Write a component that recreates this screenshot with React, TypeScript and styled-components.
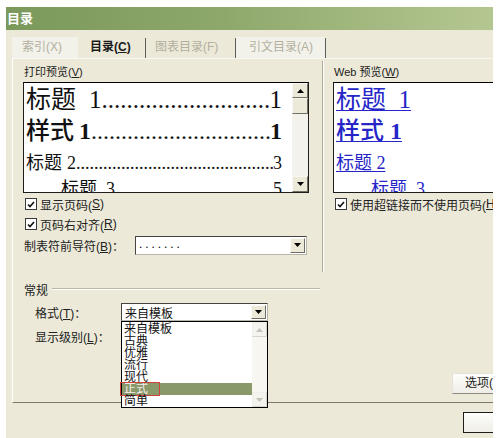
import React from 'react';
import styled, { createGlobalStyle } from 'styled-components';

const SANS = `"Liberation Sans", "Noto Sans CJK SC", sans-serif`;
const SERIF = `"Liberation Serif", "Noto Sans CJK SC", serif`;

const Global = createGlobalStyle`
  html, body { margin: 0; padding: 0; background: #ffffff; }
  body { font-family: ${SANS}; }
  * { box-sizing: border-box; }
`;

const Screen = styled.div`
  width: 500px;
  height: 438px;
  padding: 7px 7px 0 6px;
  background: #ffffff;
  overflow: hidden;
`;

const Dialog = styled.div`
  width: 487px;
  height: 431px;
  background: #ece9d8;
  display: flex;
  flex-direction: column;
  overflow: hidden;
`;

const TitleBar = styled.div`
  height: 23px;
  flex-shrink: 0;
  background: linear-gradient(90deg, #7a995a 0%, #8ea86c 45%, #b5c791 100%);
  color: #ffffff;
  font: bold 13px/23px ${SANS};
  padding-left: 1px;
`;

const Body = styled.div`
  display: flex;
  flex-direction: column;
  padding: 7px 0 0 6px;
`;

const TabRow = styled.div`
  display: flex;
  height: 21px;
`;

const Tab = styled.div<{ $w: number; $pl: number; $off?: boolean; $raised?: boolean }>`
  width: ${(p) => p.$w}px;
  padding-left: ${(p) => p.$pl}px;
  font-size: 12px;
  line-height: 21px;
  white-space: nowrap;
  color: ${(p) => (p.$off ? '#b3b09f' : '#1a1a1a')};
  font-weight: ${(p) => (p.$off ? 400 : 700)};
  background: ${(p) => (p.$raised ? '#f2f1ea' : 'transparent')};
`;

const TabSep = styled.div`
  width: 1px;
  margin: 1px 0 0;
  background: #5c5c5c;
`;

const Panel = styled.div`
  width: 481px;
  height: 345px;
  border-top: 1px solid #f8f7f2;
  border-left: 1px solid #ffffff;
  border-bottom: 1px solid #7d7b70;
  display: flex;
  flex-direction: column;
`;

const TopArea = styled.div`
  display: flex;
  height: 213px;
  flex-shrink: 0;
`;

const LeftCol = styled.div`
  width: 309px;
  padding: 7px 0 0 11px;
  display: flex;
  flex-direction: column;
`;

const RightCol = styled.div`
  flex: 1;
  padding: 7px 0 0 10px;
  display: flex;
  flex-direction: column;
  overflow: hidden;
`;

const VSep = styled.div`
  width: 2px;
  margin-top: 2px;
  border-left: 1px solid #aca899;
  border-right: 1px solid #ffffff;
`;

const Caption = styled.div`
  font-size: 11px;
  line-height: 12px;
  height: 12px;
  color: #222;
  white-space: nowrap;
`;

const PreviewBox = styled.div<{ $w: number }>`
  margin: 4px 0 0 -1px;
  width: ${(p) => p.$w}px;
  height: 111px;
  flex-shrink: 0;
  border: 1px solid #1e1e1e;
  border-top-color: #000;
  background: #ffffff;
  display: flex;
  overflow: hidden;
`;

const PreviewText = styled.div<{ $pr: number }>`
  flex: 1;
  min-width: 0;
  padding: 0 ${(p) => p.$pr}px 0 2px;
  overflow: hidden;
`;

const PRow = styled.div<{ $size: number; $lh: number; $bold?: boolean; $indent?: number }>`
  display: flex;
  align-items: baseline;
  height: ${(p) => p.$lh}px;
  line-height: ${(p) => p.$lh}px;
  font-family: ${SERIF};
  font-size: ${(p) => p.$size}px;
  font-weight: ${(p) => (p.$bold ? 500 : 400)};
  color: #111;
  padding-left: ${(p) => p.$indent ?? 0}px;
  white-space: nowrap;
`;

const Num = styled.span<{ $gap: number; $bold?: boolean }>`
  margin-left: ${(p) => p.$gap}px;
  font-weight: ${(p) => (p.$bold ? 700 : 400)};
`;

const Leader = styled.span`
  flex: 1;
  min-width: 0;
  overflow: hidden;
  white-space: nowrap;
  font-weight: 400;
`;

const Page = styled.span<{ $bold?: boolean }>`
  flex-shrink: 0;
  font-weight: ${(p) => (p.$bold ? 700 : 400)};
`;

const LinkRow = styled(PRow)`
  color: #2626c8;
`;

const Link = styled.span`
  text-decoration: underline;
  text-decoration-thickness: 1px;
  text-underline-offset: 2px;
`;

const ScrollBar = styled.div<{ $w: number; $light?: boolean }>`
  width: ${(p) => p.$w}px;
  flex-shrink: 0;
  display: flex;
  flex-direction: column;
  background: ${(p) => (p.$light ? '#f7f6f1' : '#f3f2ec')};
`;

const SBtn = styled.div<{ $h: number; $off?: boolean }>`
  height: ${(p) => p.$h}px;
  display: flex;
  align-items: center;
  justify-content: center;
  background: ${(p) => (p.$off ? '#f4f3ee' : '#ece9d8')};
  border: 1px solid;
  border-color: ${(p) =>
    p.$off ? '#f0efe9 #d8d6cc #d8d6cc #f0efe9' : '#f8f7f3 #716f64 #716f64 #f8f7f3'};
`;

const Spacer = styled.div`
  flex: 1;
`;

const Arrow = ({ up, color = '#000' }: { up?: boolean; color?: string }) => (
  <svg width="7" height="4" viewBox="0 0 7 4">
    <polygon points={up ? '0,4 7,4 3.5,0' : '0,0 7,0 3.5,4'} fill={color} />
  </svg>
);

const CheckRow = styled.div<{ $mt?: number }>`
  display: flex;
  align-items: center;
  height: 20px;
  margin-top: ${(p) => p.$mt ?? 0}px;
  padding-left: 1px;
  font-size: 12px;
  color: #222;
  white-space: nowrap;
`;

const Box = styled.span`
  width: 12px;
  height: 12px;
  flex-shrink: 0;
  margin-right: 3px;
  background: #ffffff;
  border: 1px solid #3a3a3a;
  display: flex;
  align-items: center;
  justify-content: center;
`;

const Check = () => (
  <Box>
    <svg width="8" height="7" viewBox="0 0 8 7">
      <path d="M1 3.5 L3 5.5 L7 1" stroke="#111" strokeWidth="1.6" fill="none" />
    </svg>
  </Box>
);

const LeaderRow = styled.div`
  display: flex;
  align-items: center;
  height: 22px;
  font-size: 12px;
  color: #222;
  white-space: nowrap;
`;

const LeaderLabel = styled.span`
  width: 111px;
`;

const Combo = styled.div<{ $w: number; $h: number }>`
  position: relative;
  width: ${(p) => p.$w}px;
  height: ${(p) => p.$h}px;
  background: #ffffff;
  border: 1px solid #444;
  border-right-color: #b8b6aa;
  border-bottom-color: #b8b6aa;
  display: flex;
  align-items: center;
`;

const ComboText = styled.span`
  flex: 1;
  padding-left: 3px;
  font-size: 12px;
  color: #111;
  white-space: nowrap;
`;

const DotText = styled(ComboText)`
  font-family: ${SERIF};
  letter-spacing: 3px;
  font-size: 13px;
  line-height: 13px;
  padding-bottom: 4px;
`;

const ComboBtn = styled.div<{ $h: number }>`
  width: 15px;
  height: ${(p) => p.$h}px;
  margin-right: 1px;
  display: flex;
  align-items: center;
  justify-content: center;
  background: #ece9d8;
  border: 1px solid;
  border-color: #fbfaf6 #716f64 #716f64 #fbfaf6;
`;

const General = styled.div`
  display: flex;
  flex-direction: column;
  padding: 11px 0 0 11px;
`;

const GroupHead = styled.div`
  display: flex;
  align-items: center;
  width: 296px;
  height: 12px;
  font-size: 12px;
  color: #222;
`;

const GroupLine = styled.div`
  flex: 1;
  margin-left: 4px;
  height: 2px;
  border-top: 1px solid #b9b6a6;
  border-bottom: 1px solid #ffffff;
`;

const FieldRow = styled.div<{ $mt: number }>`
  display: flex;
  align-items: center;
  height: 18px;
  margin-top: ${(p) => p.$mt}px;
  padding-left: 11px;
  font-size: 12px;
  color: #222;
`;

const FieldLabel = styled.span`
  width: 86px;
  white-space: nowrap;
`;

const DropList = styled.div`
  position: absolute;
  top: 17px;
  left: -1px;
  width: 147px;
  height: 87px;
  background: #ffffff;
  border: 1px solid #000;
  display: flex;
  z-index: 5;
`;

const Items = styled.div`
  flex: 1;
  padding-top: 1px;
`;

const Item = styled.div<{ $sel?: boolean }>`
  position: relative;
  height: 12px;
  line-height: 12px;
  font-size: 12px;
  padding-left: 2px;
  color: ${(p) => (p.$sel ? '#f6ecec' : '#111')};
  background: ${(p) => (p.$sel ? '#8a996a' : 'transparent')};
  white-space: nowrap;
`;

const Mark = styled.span`
  position: absolute;
  left: -2px;
  top: -1px;
  width: 40px;
  height: 14px;
  border: 1px solid #d2423c;
`;

const ButtonRow = styled.div<{ $mt: number; $pl: number }>`
  display: flex;
  margin-top: ${(p) => p.$mt}px;
  padding-left: ${(p) => p.$pl}px;
`;

const Btn = styled.div<{ $def?: boolean }>`
  width: 80px;
  height: 21px;
  flex-shrink: 0;
  padding-left: 12px;
  font-size: 12px;
  line-height: 19px;
  color: #222;
  white-space: nowrap;
  background: linear-gradient(#fdfdfb, #efeee8);
  border: 1px solid;
  border-color: ${(p) => (p.$def ? '#1c1c1c' : '#e6e4da #8c8a80 #8c8a80 #e6e4da')};
`;

const dots = '.'.repeat(120);

const styles = ['来自模板', '古典', '优雅', '流行', '现代', '正式', '简单'];

export default function App() {
  return (
    <>
      <Global />
      <Screen>
        <Dialog>
          <TitleBar>目录</TitleBar>
          <Body>
            <TabRow>
              <Tab $w={66} $pl={10} $off $raised>索引(X)</Tab>
              <Tab $w={67} $pl={12}>目录(<u>C</u>)</Tab>
              <TabSep />
              <Tab $w={89} $pl={9} $off>图表目录(F)</Tab>
              <TabSep />
              <Tab $w={89} $pl={13} $off $raised>引文目录(A)</Tab>
              <TabSep />
            </TabRow>
            <Panel>
              <TopArea>
                <LeftCol>
                  <Caption>打印预览(<u>V</u>)</Caption>
                  <PreviewBox $w={286}>
                    <PreviewText $pr={10}>
                      <PRow $size={25} $lh={34}>
                        标题<Num $gap={13}>1</Num>
                        <Leader>{dots}</Leader>
                        <Page>1</Page>
                      </PRow>
                      <PRow $size={24} $lh={28} $bold>
                        样式<Num $gap={5} $bold>1</Num>
                        <Leader>{dots}</Leader>
                        <Page $bold>1</Page>
                      </PRow>
                      <PRow $size={18} $lh={36}>
                        标题<Num $gap={5}>2</Num>
                        <Leader>{dots}</Leader>
                        <Page>3</Page>
                      </PRow>
                      <PRow $size={18} $lh={16} $indent={35}>
                        标题<Num $gap={9}>3</Num>
                        <Leader>{dots}</Leader>
                        <Page>5</Page>
                      </PRow>
                    </PreviewText>
                    <ScrollBar $w={16}>
                      <SBtn $h={15}><Arrow up /></SBtn>
                      <SBtn $h={16} />
                      <Spacer />
                      <SBtn $h={16}><Arrow /></SBtn>
                    </ScrollBar>
                  </PreviewBox>
                  <CheckRow $mt={1}><Check />显示页码(<u>S</u>)</CheckRow>
                  <CheckRow><Check />页码右对齐(<u>R</u>)</CheckRow>
                  <LeaderRow>
                    <LeaderLabel>制表符前导符(<u>B</u>)：</LeaderLabel>
                    <Combo $w={172} $h={19}>
                      <DotText>.......</DotText>
                      <ComboBtn $h={15}><Arrow /></ComboBtn>
                    </Combo>
                  </LeaderRow>
                </LeftCol>
                <VSep />
                <RightCol>
                  <Caption>Web 预览(<u>W</u>)</Caption>
                  <PreviewBox $w={175}>
                    <PreviewText $pr={0}>
                      <LinkRow $size={25} $lh={34}>
                        <Link>标题&nbsp;&nbsp;1</Link>
                      </LinkRow>
                      <LinkRow $size={24} $lh={28} $bold>
                        <Link>样式 <Num $gap={0} $bold>1</Num></Link>
                      </LinkRow>
                      <LinkRow $size={18} $lh={36}>
                        <Link>标题 2</Link>
                      </LinkRow>
                      <LinkRow $size={18} $lh={16} $indent={35}>
                        <Link>标题&nbsp;&nbsp;3</Link>
                      </LinkRow>
                    </PreviewText>
                  </PreviewBox>
                  <CheckRow $mt={1}><Check />使用超链接而不使用页码(<u>H</u>)</CheckRow>
                </RightCol>
              </TopArea>
              <General>
                <GroupHead>常规<GroupLine /></GroupHead>
                <FieldRow $mt={8}>
                  <FieldLabel>格式(<u>T</u>)：</FieldLabel>
                  <Combo $w={147} $h={18}>
                    <ComboText>来自模板</ComboText>
                    <ComboBtn $h={14}><Arrow /></ComboBtn>
                    <DropList>
                      <Items>
                        {styles.map((s) => (
                          <Item key={s} $sel={s === '正式'}>
                            {s}
                            {s === '正式' && <Mark />}
                          </Item>
                        ))}
                      </Items>
                      <ScrollBar $w={15} $light>
                        <SBtn $h={15} $off><Arrow up color="#c5c3b8" /></SBtn>
                        <Spacer />
                        <SBtn $h={15} $off><Arrow color="#c5c3b8" /></SBtn>
                      </ScrollBar>
                    </DropList>
                  </Combo>
                </FieldRow>
                <FieldRow $mt={6}>
                  <FieldLabel>显示级别(<u>L</u>)：</FieldLabel>
                </FieldRow>
                <ButtonRow $mt={28} $pl={428}>
                  <Btn>选项(<u>O</u>)...</Btn>
                </ButtonRow>
              </General>
            </Panel>
            <ButtonRow $mt={9} $pl={451}>
              <Btn $def />
            </ButtonRow>
          </Body>
        </Dialog>
      </Screen>
    </>
  );
}
